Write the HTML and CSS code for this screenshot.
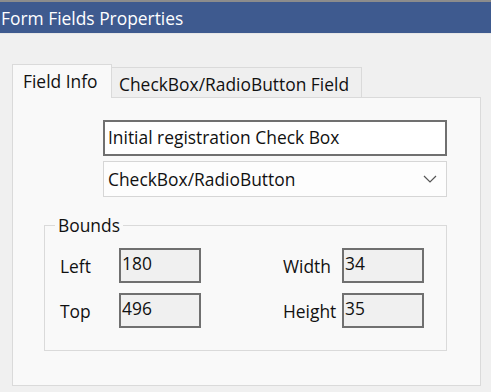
FILE: index.html
```html
<!DOCTYPE html>
<html lang="en">
<head>
  <meta charset="UTF-8"/>
  <title>Form Fields Properties</title>
  <link rel="stylesheet" href="styles.css">
</head>
<body>
  <div class="titlebar">Form Fields Properties</div>

  <div class="dialog">
    <div class="tabs">
      <div class="tab active">Field Info</div>
      <div class="tab">CheckBox/RadioButton Field</div>
    </div>

    <div class="panel">
      <div class="field-name">Initial registration Check Box</div>
      <div class="field-type">
        <span>CheckBox/RadioButton</span>
        <svg class="chevron" width="14" height="8" viewBox="0 0 14 8">
          <path d="M1 1 L7 7 L13 1" fill="none" stroke="#555" stroke-width="1.2"/>
        </svg>
      </div>

      <fieldset class="bounds">
        <legend>Bounds</legend>
        <div class="bounds-grid">
          <span class="label">Left</span>
          <span class="value">180</span>
          <span></span>
          <span class="label">Width</span>
          <span class="value">34</span>

          <span class="label">Top</span>
          <span class="value">496</span>
          <span></span>
          <span class="label">Height</span>
          <span class="value">35</span>
        </div>
      </fieldset>
    </div>
  </div>
</body>
</html>
```

FILE: styles.css
```css
:root {
  --title-bg: #3e5a8f;
  --window-bg: #f0f0f0;
  --panel-bg: #f9f9f9;
  --border: #dadada;
  --text: #111;
}

body {
  margin: 0;
  background-color: var(--window-bg);
  font-family: 'Open Sans', 'Noto Sans', sans-serif;
  font-size: 17.4px;
  color: var(--text);
}

.titlebar {
  height: 31px;
  border-top: 2px solid #8c8c8c;
  border-bottom: 1px solid #e6e6e6;
  background-color: var(--title-bg);
  color: white;
  padding-left: 1px;
  line-height: 33px;
}

.dialog {
  padding: 29px 10px 0 12px;
}

.tabs {
  display: flex;
  align-items: flex-end;
}

.tab {
  height: 29px;
  padding-left: 7px;
  width: 242px;
  border: 1px solid var(--border);
  border-bottom: none;
  border-left: none;
  background-color: #efefef;
  line-height: 32px;
  white-space: nowrap;
}

.tab.active {
  height: 33px;
  width: 88px;
  padding-left: 10px;
  border-left: 1px solid var(--border);
  background-color: var(--panel-bg);
  position: relative;
  top: 1px;
  line-height: 32px;
}

.panel {
  box-sizing: border-box;
  height: 289px;
  width: 469px;
  padding-top: 22px;
  border: 1px solid var(--border);
  background-color: var(--panel-bg);
}

.field-name,
.field-type {
  margin-left: 90px;
  width: 344px;
  height: 36px;
  box-sizing: border-box;
  padding-left: 3px;
  line-height: 31px;
  background-color: white;
  white-space: nowrap;
}

.field-name {
  border: 2px solid #707070;
}

.field-type {
  margin-top: 5px;
  border: 1px solid #d6d6d6;
  padding-left: 4px;
  line-height: 33px;
  background-color: #fdfdfd;
  display: flex;
  justify-content: space-between;
  align-items: center;
}

.chevron {
  margin-right: 9px;
}

.bounds {
  margin: 18px 0 0 31px;
  width: 381px;
  padding: 0 10px 22px;
  border: 1px solid var(--border);
}

.bounds legend {
  padding: 0 3px;
  line-height: 20px;
}

.bounds-grid {
  margin: 13px 0 0 5px;
  display: grid;
  grid-template-columns: 59px 82px 82px 59px 82px;
  grid-auto-rows: 35px;
  row-gap: 10px;
  align-items: center;
}

.label {
  white-space: nowrap;
}

.value {
  height: 35px;
  box-sizing: border-box;
  border: 2px solid #707070;
  background-color: #f0f0f0;
  padding-left: 1px;
  line-height: 26px;
}
```
